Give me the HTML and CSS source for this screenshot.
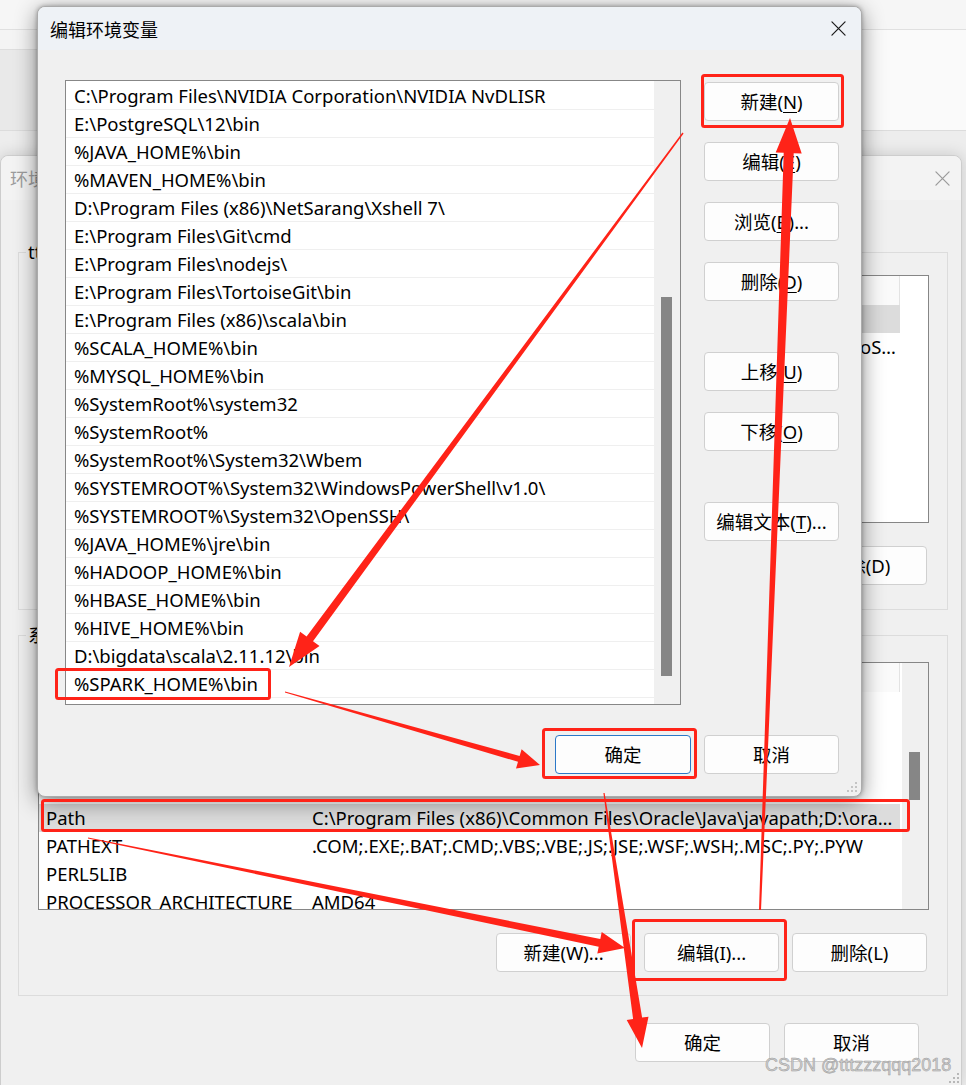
FILE: index.html
```html
<!DOCTYPE html>
<html lang="zh-CN">
<head>
<meta charset="utf-8">
<title>编辑环境变量</title>
<link rel="stylesheet" href="styles.css">
</head>
<body>
<div class="desktop">

  <div class="sysprops">
    <div class="sp-top"></div>
    <div class="sp-mid">
      <div class="sp-side"><div class="sp-side-tab"></div></div>
      <div class="sp-main"></div>
    </div>
    <div class="sp-bot"></div>
  </div>

  <section class="win envwin">
    <header class="titlebar env-titlebar">
      <span class="env-title">环境变量</span>
      <svg class="xicon xicon-dim" viewBox="0 0 16 16"><path d="M1 1 L15 15 M15 1 L1 15"/></svg>
    </header>
    <div class="env-body">
      <fieldset class="group group-user">
        <legend>tttzzzqqq 的用户变量(U)</legend>
        <div class="lv">
          <div class="lv-main">
            <div class="lv-head"><span class="c1">变量</span><span class="c2">值</span></div>
            <div class="lv-row sel"><span class="c1">OneDrive</span><span class="c2">C:\Users\tttzzzqqq\OneDrive</span></div>
            <div class="lv-row"><span class="c1">Path</span><span class="c2 tail"><span>C:\Users\tttzzzqqq\AppData\Local\Microsoft\WindowsApps;D:\Program Files\JetBrains\bin;D:\Program Files\DemoS…</span></span></div>
            <div class="lv-row"><span class="c1">TEMP</span><span class="c2">%USERPROFILE%\AppData\Local\Temp</span></div>
            <div class="lv-row"><span class="c1">TMP</span><span class="c2">%USERPROFILE%\AppData\Local\Temp</span></div>
          </div>
        </div>
        <div class="btnrow">
          <button class="btn">新建(N)...</button>
          <button class="btn">编辑(E)...</button>
          <button class="btn">删除(D)</button>
        </div>
      </fieldset>

      <fieldset class="group group-sys">
        <legend>系统变量(S)</legend>
        <div class="lv">
          <div class="lv-main">
            <div class="lv-head"><span class="c1">变量</span><span class="c2">值</span></div>
            <div class="lv-row"><span class="c1">MAVEN_HOME</span><span class="c2">D:\bigdata\apache-maven-3.6.3</span></div>
            <div class="lv-row"><span class="c1">MYSQL_HOME</span><span class="c2">D:\Program Files\mysql-8.0.22</span></div>
            <div class="lv-row"><span class="c1">NUMBER_OF_PROCESSORS</span><span class="c2">16</span></div>
            <div class="lv-row"><span class="c1">OS</span><span class="c2">Windows_NT</span></div>
            <div class="lv-row sel"><span class="c1">Path</span><span class="c2">C:\Program Files (x86)\Common Files\Oracle\Java\javapath;D:\oracle\product\11.2.0\dbhome_1\bin</span></div>
            <div class="lv-row"><span class="c1">PATHEXT</span><span class="c2">.COM;.EXE;.BAT;.CMD;.VBS;.VBE;.JS;.JSE;.WSF;.WSH;.MSC;.PY;.PYW</span></div>
            <div class="lv-row"><span class="c1">PERL5LIB</span><span class="c2"></span></div>
            <div class="lv-row"><span class="c1">PROCESSOR_ARCHITECTURE</span><span class="c2">AMD64</span></div>
          </div>
          <div class="vscroll"><div class="thumb sys-thumb"></div></div>
        </div>
        <div class="btnrow">
          <button class="btn">新建(W)...</button>
          <button class="btn">编辑(I)...</button>
          <button class="btn">删除(L)</button>
        </div>
      </fieldset>

      <div class="okrow">
        <button class="btn">确定</button>
        <button class="btn">取消</button>
      </div>
    </div>
    <svg class="grip env-grip" viewBox="0 0 12 12"><rect x="9" y="1" width="2" height="2"/><rect x="5" y="5" width="2" height="2"/><rect x="9" y="5" width="2" height="2"/><rect x="1" y="9" width="2" height="2"/><rect x="5" y="9" width="2" height="2"/><rect x="9" y="9" width="2" height="2"/></svg>
  </section>

  <section class="win fg">
    <header class="titlebar fg-titlebar">
      <span class="fg-title">编辑环境变量</span>
      <svg class="xicon" viewBox="0 0 16 16"><path d="M1 1 L15 15 M15 1 L1 15"/></svg>
    </header>
    <div class="fg-body">
      <div class="pathlist">
        <div class="pl-rows">
          <div class="pl-row">C:\Program Files\NVIDIA Corporation\NVIDIA NvDLISR</div>
          <div class="pl-row">E:\PostgreSQL\12\bin</div>
          <div class="pl-row">%JAVA_HOME%\bin</div>
          <div class="pl-row">%MAVEN_HOME%\bin</div>
          <div class="pl-row">D:\Program Files (x86)\NetSarang\Xshell 7\</div>
          <div class="pl-row">E:\Program Files\Git\cmd</div>
          <div class="pl-row">E:\Program Files\nodejs\</div>
          <div class="pl-row">E:\Program Files\TortoiseGit\bin</div>
          <div class="pl-row">E:\Program Files (x86)\scala\bin</div>
          <div class="pl-row">%SCALA_HOME%\bin</div>
          <div class="pl-row">%MYSQL_HOME%\bin</div>
          <div class="pl-row">%SystemRoot%\system32</div>
          <div class="pl-row">%SystemRoot%</div>
          <div class="pl-row">%SystemRoot%\System32\Wbem</div>
          <div class="pl-row">%SYSTEMROOT%\System32\WindowsPowerShell\v1.0\</div>
          <div class="pl-row">%SYSTEMROOT%\System32\OpenSSH\</div>
          <div class="pl-row">%JAVA_HOME%\jre\bin</div>
          <div class="pl-row">%HADOOP_HOME%\bin</div>
          <div class="pl-row">%HBASE_HOME%\bin</div>
          <div class="pl-row">%HIVE_HOME%\bin</div>
          <div class="pl-row">D:\bigdata\scala\2.11.12\bin</div>
          <div class="pl-row">%SPARK_HOME%\bin</div>
        </div>
        <div class="pl-scroll"><div class="thumb pl-thumb"></div></div>
      </div>
      <div class="sidebtns">
        <button class="btn">新建(<u>N</u>)</button>
        <button class="btn">编辑(<u>E</u>)</button>
        <button class="btn">浏览(<u>B</u>)...</button>
        <button class="btn">删除(<u>D</u>)</button>
        <button class="btn spaced">上移(<u>U</u>)</button>
        <button class="btn">下移(<u>O</u>)</button>
        <button class="btn spaced">编辑文本(<u>T</u>)...</button>
      </div>
      <div class="fg-foot">
        <button class="btn btn-default">确定</button>
        <button class="btn">取消</button>
      </div>
    </div>
    <svg class="grip fg-grip" viewBox="0 0 12 12"><rect x="9" y="1" width="2" height="2"/><rect x="5" y="5" width="2" height="2"/><rect x="9" y="5" width="2" height="2"/><rect x="1" y="9" width="2" height="2"/><rect x="5" y="9" width="2" height="2"/><rect x="9" y="9" width="2" height="2"/></svg>
  </section>

  <svg class="marks" viewBox="0 0 966 1085">
    <g class="mark-rects">
      <rect x="702.5" y="75.5" width="140" height="51" rx="2"/>
      <rect x="56.5" y="669.5" width="213" height="29" rx="2"/>
      <rect x="543.5" y="729.5" width="152" height="48" rx="2"/>
      <rect x="42.5" y="800.5" width="866" height="30" rx="2"/>
      <rect x="633.5" y="920.5" width="152" height="59" rx="2"/>
    </g>
    <g class="mark-arrows">
      <polygon points="683.6,133.4 313.0,641.2 319.5,645.9 289,667 300.1,631.7 306.6,636.4 682.4,132.6"/>
      <polygon points="284.9,692.5 518.0,761.8 516.0,768.5 540,765 521.6,749.3 519.6,756.0 285.1,691.5"/>
      <polygon points="87.9,838.5 598.7,946.7 597.3,953.6 625,948 601.7,932.0 600.3,938.9 88.1,837.5"/>
      <polygon points="761.0,910.0 793.7,153.2 801.7,153.5 790,118 775.7,152.5 783.7,152.8 759.0,910.0"/>
      <polygon points="603.4,793.1 633.1,1019.0 626.7,1019.9 642,1048 648.5,1016.7 642.1,1017.6 604.6,792.9"/>
    </g>
  </svg>

  <div class="watermark">CSDN @tttzzzqqq2018</div>
</div>
</body>
</html>
```

FILE: styles.css
```css
* { box-sizing: border-box; }
html, body { margin: 0; padding: 0; }
body {
  width: 966px;
  height: 1085px;
  overflow: hidden;
  background: #efefef;
  font-family: "Noto Sans", "Noto Sans CJK SC", sans-serif;
  font-size: 18.5px;
  color: #000;
}
.desktop { position: relative; width: 966px; height: 1085px; overflow: hidden; }

/* top background window */
.sysprops {
  position: absolute; left: 0; top: 0;
  width: 966px; height: 170px;
  display: flex; flex-direction: column;
  background: #ececec;
}
.sp-top { height: 30px; background: #f6f6f6; border-bottom: 1px solid #e0e0e0; }
.sp-mid { height: 101px; display: flex; border-bottom: 1px solid #dcdcdc; }
.sp-side { width: 300px; background: #e9e9e9; display: flex; flex-direction: column; }
.sp-side-tab { height: 20px; background: #f4f4f4; border-bottom: 1px solid #dedede; }
.sp-main { flex: 1; background: #fafafa; }
.sp-bot { flex: 1; background: #ededed; }

/* windows */
.win { position: absolute; background: #f0f0f0; }
.titlebar { display: flex; align-items: center; justify-content: space-between; }
.xicon { width: 15px; height: 15px; fill: none; stroke: #1c1c1c; stroke-width: 1.3; stroke-linecap: round; }
.xicon-dim { stroke: #9a9a9a; }

.btn {
  width: 135px; height: 39px; padding: 0;
  border: 1px solid #d0d0d0; border-radius: 4px;
  background: #fdfdfd;
  font-family: inherit; font-size: 18.5px; color: #000;
  line-height: 37px; text-align: center;
}
.btn u { text-decoration-thickness: 1px; text-underline-offset: 3px; }
.btn-default { width: 136px; border-color: #2b78c8; }

.grip { position: absolute; width: 12px; height: 12px; fill: #b8b8b8; }

/* background env window */
.envwin {
  left: 0; top: 155px;
  width: 962px; height: 931px;
  border: 1px solid #cdcdcd;
  border-radius: 8px 8px 0 0;
  box-shadow: 0 0 16px rgba(0,0,0,.16);
  z-index: 1;
}
.env-titlebar { height: 44px; padding: 0 11px 0 9px; background: #f3f3f3; border-radius: 8px 8px 0 0; }
.env-title { font-size: 18px; color: #9c9c9c; }
.env-body { padding-left: 17px; }
.env-grip { right: 1px; bottom: 1px; }

.group {
  width: 930px; margin: 0; min-width: 0;
  padding: 11px 18px 24px 19px;
  border: 1px solid #dcdcdc;
}
.group legend { padding: 0 2px; margin-left: -12px; height: 24px; line-height: 24px; }
.group-user { margin-top: 40px; }
.group-sys { margin-top: 13px; padding-top: 15px; padding-bottom: 23px; }

.lv {
  width: 891px; height: 248px;
  border: 1px solid #868686;
  background: #fff;
  display: flex; overflow: hidden;
}
.lv-main { flex: 1; min-width: 0; }
.lv-head { display: flex; height: 29px; width: 861px; background: #fafafa; border-right: 1px solid #e3e3e3; color: #333; }
.lv-head .c1 { border-right: 1px solid #e3e3e3; }
.lv-row { display: flex; height: 28px; width: 861px; }
.lv-row.sel { background: #dcdcdc; }
.c1 { flex: none; width: 266px; padding-left: 7px; line-height: 28px; white-space: nowrap; overflow: hidden; }
.c2 { flex: none; width: 595px; padding: 0 3px 0 7px; line-height: 28px; white-space: nowrap; overflow: hidden; text-overflow: ellipsis; }
.lv-head .c1, .lv-head .c2 { line-height: 29px; }
.c2.tail { display: flex; justify-content: flex-end; padding-right: 4px; }
.c2.tail span { flex: none; }
.vscroll { flex: none; width: 26px; background: #f0f0f0; padding-left: 7px; }
.thumb { width: 11px; background: #868686; }
.sys-thumb { margin-top: 89px; height: 48px; }

.btnrow { display: flex; justify-content: flex-end; gap: 13px; margin-top: 23px; padding-right: 2px; }
.okrow { display: flex; justify-content: flex-end; gap: 14px; margin-top: 27px; padding-right: 42px; }

/* foreground dialog */
.fg {
  left: 37px; top: 6px;
  width: 825px; height: 791px;
  border: 1px solid #ababab;
  border-radius: 8px;
  overflow: hidden;
  box-shadow: 0 0 4px rgba(0,0,0,.3), 0 5px 22px rgba(0,0,0,.45);
  z-index: 2;
}
.fg-titlebar { height: 43px; padding: 0 15px 0 12px; background: #eef2f6; }
.fg-title { font-size: 18px; }
.fg-body {
  display: grid;
  grid-template-columns: 616px 135px;
  column-gap: 23px;
  padding: 30px 0 0 27px;
}
.pathlist { height: 625px; border: 1px solid #878787; background: #fff; display: flex; }
.pl-rows { flex: none; width: 588px; padding-top: 1px; }
.pl-row { height: 28px; line-height: 27px; border-bottom: 1px solid #efefef; padding-left: 8px; white-space: nowrap; }
.pl-scroll { flex: 1; background: #f0f0f0; padding: 216px 0 0 7px; }
.pl-thumb { height: 379px; }
.sidebtns { display: flex; flex-direction: column; gap: 21px; padding-top: 2px; }
.sidebtns .spaced { margin-top: 30px; }
.fg-foot { grid-column: 1 / -1; display: flex; justify-content: flex-end; gap: 13px; margin-top: 30px; }
.fg-grip { right: 3px; bottom: 3px; fill: #c4c4c4; }

/* annotations */
.marks { position: absolute; left: 0; top: 0; width: 966px; height: 1085px; z-index: 3; pointer-events: none; }
.mark-rects rect { fill: none; stroke: #ff2318; stroke-width: 3; }
.mark-arrows polygon { fill: #ff2318; }

.watermark {
  position: absolute; left: 765px; top: 1053px; z-index: 4;
  font-family: "Liberation Sans", Arial, sans-serif;
  font-size: 18px; line-height: 24px;
  color: #cfcfcf;
  -webkit-text-stroke: 0.5px #9a9a9a;
  white-space: nowrap;
}
```
